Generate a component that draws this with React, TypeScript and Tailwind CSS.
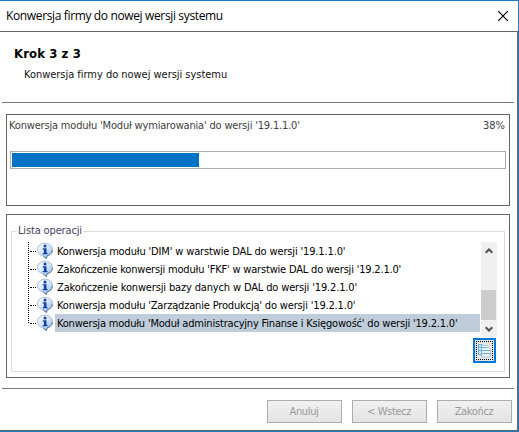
type Operation = {
  text: string;
  tracking: string;
  selected?: boolean;
};

const operations: Operation[] = [
  { text: "Konwersja modułu 'DIM' w warstwie DAL do wersji '19.1.1.0'", tracking: "tracking-[-0.15px]" },
  { text: "Zakończenie konwersji modułu 'FKF' w warstwie DAL do wersji '19.2.1.0'", tracking: "tracking-[-0.19px]" },
  { text: "Zakończenie konwersji bazy danych w DAL do wersji '19.2.1.0'", tracking: "tracking-[-0.15px]" },
  { text: "Konwersja modułu 'Zarządzanie Produkcją' do wersji '19.2.1.0'", tracking: "tracking-[-0.17px]" },
  {
    text: "Konwersja modułu 'Moduł administracyjny Finanse i Księgowość' do wersji '19.2.1.0'",
    tracking: "tracking-[-0.19px]",
    selected: true,
  },
];

const InfoIcon = () => (
  <svg width="18" height="18" viewBox="0 0 18 18" className="shrink-0">
    <defs>
      <linearGradient id="bubble" x1="0" y1="0" x2="1" y2="1">
        <stop offset="0" stopColor="#ffffff" />
        <stop offset="0.5" stopColor="#d4e6fa" />
        <stop offset="1" stopColor="#86b4e6" />
      </linearGradient>
    </defs>
    <path
      d="M9 1.2c4.2 0 7.500 2.800 7.500 6.300 0 3.200-2.700 5.700-5.500 6.300L10.400 16.500 7 13.800C3.900 13.200 1.500 10.700 1.500 7.500 1.500 4 4.800 1.200 9 1.200Z"
      fill="url(#bubble)"
      stroke="#9db3cd"
      strokeWidth="0.9"
    />
    <path
      d="M7.200 14 10.400 16.500 11.200 13.800c2.800-.7 5-2.700 5.300-5.600"
      fill="none"
      stroke="#56749c"
      strokeWidth="1"
    />
    <circle cx="9" cy="4.1" r="1.5" fill="#123fae" />
    <path d="M6.700 6.300h3.800v4.700h1v1.200H6.700V11h1.200V7.500H6.700Z" fill="#123fae" />
  </svg>
);

const CopyIcon = () => (
  <svg width="15" height="17" viewBox="0 0 15 17" className="shrink-0">
    <path d="M1.500 2.500v10h3v-10Z" fill="#dcecf8" stroke="#63aee6" />
    <path d="M4.500 3.500h5.500l3.500 4v7.500h-9Z" fill="#eef6fc" stroke="#a8cce8" />
    <path d="M4.500 2v12.500M1.500 5.500h9M1.500 8.500h11.500M4.500 11.500h9M1.500 12.500h3" stroke="#69afe2" fill="none" />
  </svg>
);

const OperationRow = ({ text, tracking, selected }: Operation) => (
  <li className="flex h-[18px] items-center">
    <span className="ml-px w-1.5 shrink-0 border-t border-dotted border-black" />
    <InfoIcon />
    <span
      className={`ml-px h-[18px] w-[425px] shrink-0 pt-[3px] pl-0.5 whitespace-nowrap text-black ${tracking} ${
        selected ? "bg-[#bfcddb]" : ""
      }`}
    >
      {text}
    </span>
  </li>
);

const Button = ({ label }: { label: string }) => (
  <button
    disabled
    className="h-[23px] w-[75px] border border-[#adadad] bg-linear-to-b from-[#f1f1f1] to-[#e3e3e3] pt-px pr-px tracking-[-0.35px] text-[#999]"
  >
    {label}
  </button>
);

const App = () => {
  return (
    <div className="flex h-[432px] w-[519px] flex-col border-t border-r border-b border-[#1979ca] bg-white font-['DejaVu_Sans_Condensed','DejaVu_Sans',sans-serif] text-[11px] leading-[14px] text-[#111] [font-stretch:condensed]">
      <header className="flex h-[31px] shrink-0 items-center justify-between border-b border-[#666] pr-2.5 pl-1.5">
        <h1 className="font-['Open_Sans',sans-serif] text-[12px] tracking-[-0.36px] text-black [font-stretch:normal]">
          Konwersja firmy do nowej wersji systemu
        </h1>
        <svg width="10" height="10" viewBox="0 0 10 10" stroke="#000" strokeWidth="1.2">
          <path d="m0 0 10 10M10 0 0 10" />
        </svg>
      </header>

      <main className="flex grow flex-col border-r border-b border-[#666]">
        <section className="ml-0.5 h-[71px] w-[512px] border-b border-[#7b7b7b] pt-[14px] pl-3">
          <h2 className="text-[13px] leading-4 font-bold tracking-[0.1px] text-black">Krok 3 z 3</h2>
          <p className="mt-1.5 pl-2.5 tracking-[-0.03px]">Konwersja firmy do nowej wersji systemu</p>
        </section>

        <section className="mt-[11px] ml-1.5 h-[92px] w-[504px] border border-[#636363] px-[3px] pt-1">
          <div className="-ml-px flex w-[496px] justify-between text-[#404040]">
            <span className="tracking-[-0.18px]">Konwersja modułu 'Moduł wymiarowania' do wersji '19.1.1.0'</span>
            <span>38%</span>
          </div>
          <div className="mt-[18px] h-[18px] w-[496px] border border-[#adadad] p-px">
            <div className="h-full w-[187px] bg-[#0072c6]" />
          </div>
        </section>

        <section className="mt-2 ml-1.5 h-[164px] w-[504px] border border-[#636363] pt-[9px] pl-1">
          <div className="flex h-[14px] w-[494px] items-center">
            <span className="mt-px h-[7px] w-1.5 shrink-0 self-end border-t border-l border-[#dcdcdc]" />
            <span className="px-px tracking-[-0.15px] text-[#444460]">Lista operacji</span>
            <span className="h-[7px] grow self-end border-t border-r border-[#dcdcdc]" />
          </div>
          <div className="h-[134px] w-[494px] border-x border-b border-[#dcdcdc] pt-1 pl-4">
            <div className="flex h-24">
              <ul className="h-[81px] w-[453px] border-l border-dotted border-black">
                {operations.map((op) => (
                  <OperationRow key={op.text} {...op} />
                ))}
              </ul>
              <div className="flex h-[95px] w-4 flex-col items-center bg-[#f0f0f0] pt-1.5 pb-1">
                <svg width="8" height="6" viewBox="0 0 8 6" fill="none" stroke="#505050" strokeWidth="2">
                  <path d="M.7 4.7 4 1.5l3.3 3.2" />
                </svg>
                <div className="mt-9 mr-px h-[30px] w-[15px] bg-[#cdcdcd]" />
                <svg className="mt-1.5" width="8" height="6" viewBox="0 0 8 6" fill="none" stroke="#505050" strokeWidth="2">
                  <path d="M.7 1.3 4 4.5l3.3-3.2" />
                </svg>
              </div>
            </div>
            <button className="ml-[445px] flex h-[25px] w-[23px] items-center justify-center border-2 border-[#0078d7] bg-[#e4e4e4] p-px">
              <span className="flex h-[19px] w-[17px] shrink-0 items-center justify-center border border-dotted border-black">
                <CopyIcon />
              </span>
            </button>
          </div>
        </section>

        <footer className="mt-2.5 ml-0.5 flex w-[512px] grow gap-2.5 border-t border-[#7b7b7b] pt-[11px] pl-[265px]">
          <Button label="Anuluj" />
          <Button label="< Wstecz" />
          <Button label="Zakończ" />
        </footer>
      </main>
    </div>
  );
};

export default App;
